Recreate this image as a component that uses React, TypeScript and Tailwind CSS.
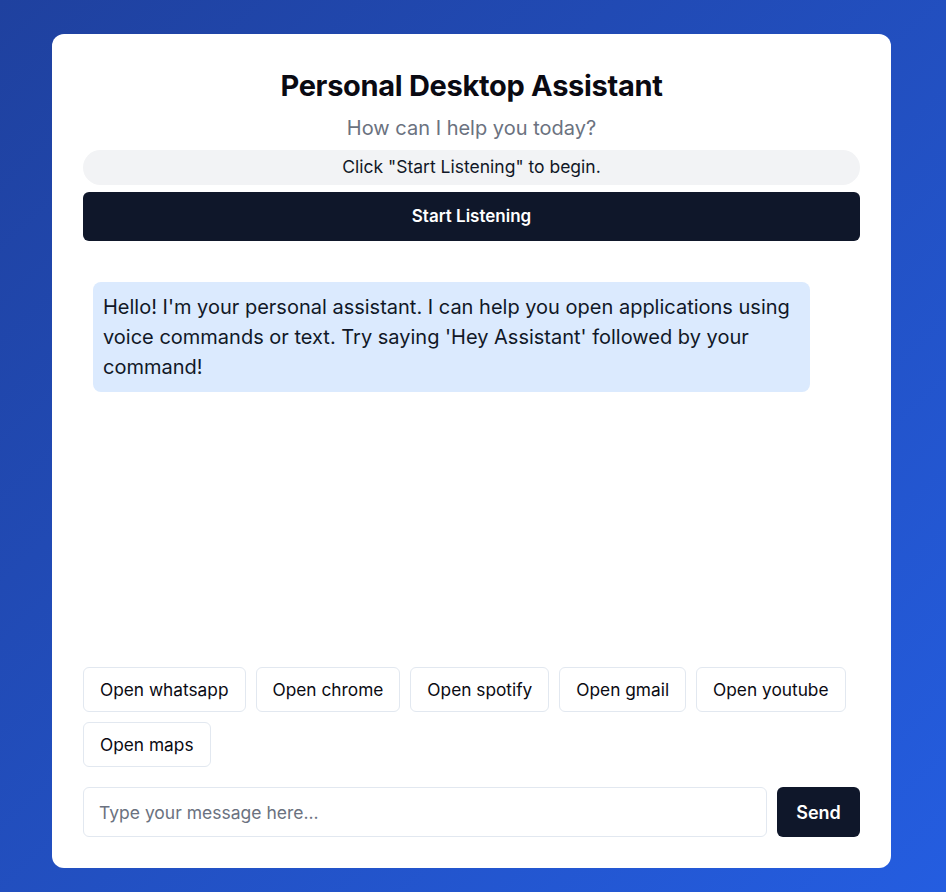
import React from "react";

export default function App() {
  const cmds = ["whatsapp", "chrome", "spotify", "gmail", "youtube", "maps"];
  return (
    <div
      className="w-full min-h-[892px] bg-gradient-to-br from-[#1f419f] to-[#245de0] pt-[34px] pb-[24px] pl-[52px]"
      style={{ fontFamily: "Inter, 'Noto Sans', sans-serif" }}
    >
      <div className="w-[839px] h-[834px] bg-white rounded-xl px-[31px] pt-[33px] pb-[31px] flex flex-col">
        <h1 className="text-[29px] leading-[38px] font-bold text-[#0a0a12] text-center tracking-[-0.3px]">
          Personal Desktop Assistant
        </h1>
        <p className="mt-[9px] text-[20px] leading-[28px] text-[#6b7280] text-center">
          How can I help you today?
        </p>
        <div className="mt-[8px] h-[35px] rounded-full bg-[#f2f3f5] flex items-center justify-center text-[17.5px] text-[#111827]">
          Click "Start Listening" to begin.
        </div>
        <button className="mt-[7px] h-[49px] rounded-md bg-[#0f172a] text-white text-[17px] font-semibold">
          Start Listening
        </button>
        <div className="flex-1 pt-[41px] px-[10px]">
          <div className="max-w-[717px] bg-[#dbeafe] rounded-lg p-[10px] text-[20px] leading-[30px] text-[#111827]">
            Hello! I'm your personal assistant. I can help you open applications using voice commands or text. Try saying 'Hey Assistant' followed by your command!
          </div>
        </div>
        <div className="flex flex-wrap gap-[10px]">
          {cmds.map((c) => (
            <button
              key={c}
              className="h-[45px] px-[16px] rounded-md border border-[#e2e8f0] bg-white text-[17.3px] text-[#0a0a12]"
            >
              Open {c}
            </button>
          ))}
        </div>
        <div className="mt-[20px] flex gap-[10px]">
          <input
            className="flex-1 h-[50px] rounded-md border border-[#e2e8f0] px-[15px] text-[17.5px] outline-none placeholder:text-[#6b7280]"
            placeholder="Type your message here..."
          />
          <button className="w-[83px] h-[50px] rounded-md bg-[#0f172a] text-white text-[18px] font-semibold">
            Send
          </button>
        </div>
      </div>
    </div>
  );
}
